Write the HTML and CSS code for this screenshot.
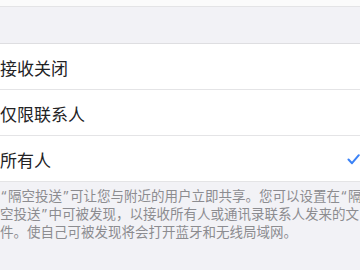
FILE: index.html
```html
<!DOCTYPE html>
<html lang="zh-CN">
<head>
<meta charset="utf-8">
<link rel="stylesheet" href="styles.css">
</head>
<body>
<div class="screen">
  <div class="prev-cell"></div>
  <div class="gap"></div>
  <div class="list">
    <div class="row"><span class="label">接收关闭</span></div>
    <div class="row"><span class="label">仅限联系人</span></div>
    <div class="row"><span class="label">所有人</span>
      <svg class="check" width="13" height="11" viewBox="0 0 13 11"><polyline points="1.5,5.5 5,9.2 11.8,1.2" fill="none" stroke="#3b82f6" stroke-width="2" stroke-linecap="round" stroke-linejoin="round"/></svg>
    </div>
  </div>
  <div class="footer">
    <div class="line"><span class="q">“</span>隔空投送<span class="q">”</span>可让您与附近的用户立即共享。您可以设置在<span class="q">“</span>隔</div>
    <div class="line">空投送<span class="q">”</span>中可被发现，以接收所有人或通讯录联系人发来的文</div>
    <div class="line">件。使自己可被发现将会打开蓝牙和无线局域网。</div>
  </div>
</div>
</body>
</html>
```
FILE: styles.css
```css
html, body {
  margin: 0;
  padding: 0;
  background: #f2f2f6;
}
.screen {
  width: 360px;
  height: 270px;
  overflow: hidden;
  background: #f2f2f6;
  font-family: "Noto Sans CJK SC", "Noto Sans", sans-serif;
}
.prev-cell {
  height: 6px;
  background: #fbfbfb;
  border-bottom: 1px solid #e4e4e6;
}
.gap {
  height: 36px;
}
.list {
  background: #ffffff;
  border-top: 1px solid #dedee1;
}
.row {
  box-sizing: border-box;
  height: 46px;
  display: flex;
  align-items: center;
  justify-content: space-between;
  padding-top: 2px;
  border-bottom: 1px solid #e4e4e6;
}
.label {
  font-size: 17px;
  color: #222224;
}
.check {
  display: block;
}
.footer {
  padding-top: 5px;
  font-size: 13.5px;
  line-height: 17px;
  color: #8c8c90;
}
.line {
  white-space: nowrap;
}
.q {
  display: inline-block;
  width: 8px;
  text-align: center;
  font-family: "Noto Sans", sans-serif;
}
```
